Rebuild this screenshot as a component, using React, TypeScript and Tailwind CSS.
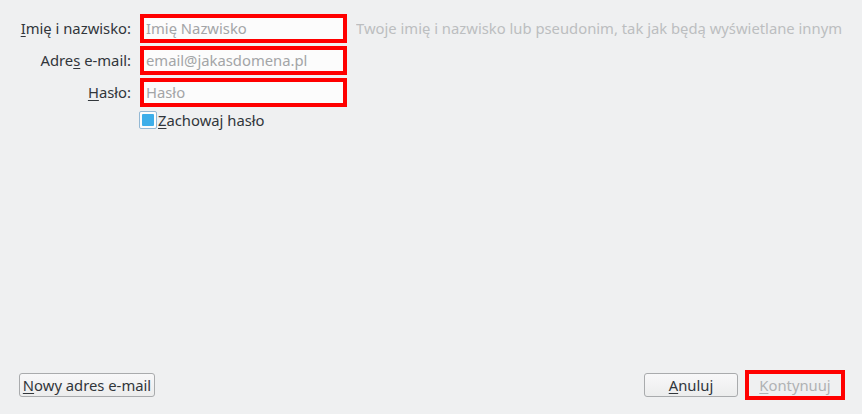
import React from "react";

const font = { fontFamily: '"Noto Sans", "DejaVu Sans", sans-serif' };

function Field({ placeholder }: { placeholder: string }) {
  return (
    <div className="h-[29px] w-[207px] border-4 border-[#ff0000] bg-[#fcfcfc] flex items-center pl-[2px] text-[14.8px] text-[#a3a5a7] leading-none whitespace-nowrap overflow-hidden">
      {placeholder}
    </div>
  );
}

export default function App() {
  return (
    <div
      className="w-[862px] h-[414px] bg-[#eff0f1] text-[#31363b] flex flex-col justify-between overflow-hidden text-[14.8px]"
      style={font}
    >
      <div className="pt-[14px] pl-[19px] flex flex-col gap-[3px]">
        <div className="flex items-center gap-[9px]">
          <div className="w-[112px] text-right whitespace-nowrap">
            <span className="underline underline-offset-2">I</span>mię i nazwisko:
          </div>
          <Field placeholder="Imię Nazwisko" />
          <div className="whitespace-nowrap text-[#bcbec0] overflow-hidden w-[497px]">
            Twoje imię i nazwisko lub pseudonim, tak jak będą wyświetlane innym
          </div>
        </div>
        <div className="flex items-center gap-[9px]">
          <div className="w-[112px] text-right whitespace-nowrap">
            Adre<span className="underline underline-offset-2">s</span> e-mail:
          </div>
          <Field placeholder="email@jakasdomena.pl" />
        </div>
        <div className="flex items-center gap-[9px]">
          <div className="w-[112px] text-right whitespace-nowrap">
            <span className="underline underline-offset-2">H</span>asło:
          </div>
          <Field placeholder="Hasło" />
        </div>
        <div className="flex items-center pl-[120px] h-[20px]">
          <div className="w-[18px] h-[18px] rounded-[2px] border border-[#93b8d4] bg-[#fcfcfc] p-[2px]">
            <div className="w-full h-full bg-[#3daee9] rounded-[1px]" />
          </div>
          <span className="ml-[1px] leading-none">
            <span className="underline underline-offset-2">Z</span>achowaj hasło
          </span>
        </div>
      </div>
      <div className="flex items-center justify-between pl-[19px] pr-[17px] pb-[14px]">
        <button className="h-[24px] w-[136px] rounded-[3px] border border-[#a9abad] bg-gradient-to-b from-[#f8f8f9] to-[#eceded] flex items-center justify-center text-[14.8px] text-[#31363b] whitespace-nowrap leading-none">
          <span className="underline underline-offset-2">N</span>owy adres e-mail
        </button>
        <div className="flex items-center gap-[7px]">
          <button className="h-[24px] w-[94px] rounded-[3px] border border-[#a9abad] bg-gradient-to-b from-[#f8f8f9] to-[#eceded] flex items-center justify-center text-[14.8px] text-[#31363b] leading-none">
            <span className="underline underline-offset-2">A</span>nuluj
          </button>
          <div className="h-[30px] w-[100px] border-4 border-[#ff0000] bg-[#eff0f1] flex items-center justify-center text-[14.8px] text-[#b0b2b4] leading-none">
            <span className="underline underline-offset-2">K</span>ontynuuj
          </div>
        </div>
      </div>
    </div>
  );
}
